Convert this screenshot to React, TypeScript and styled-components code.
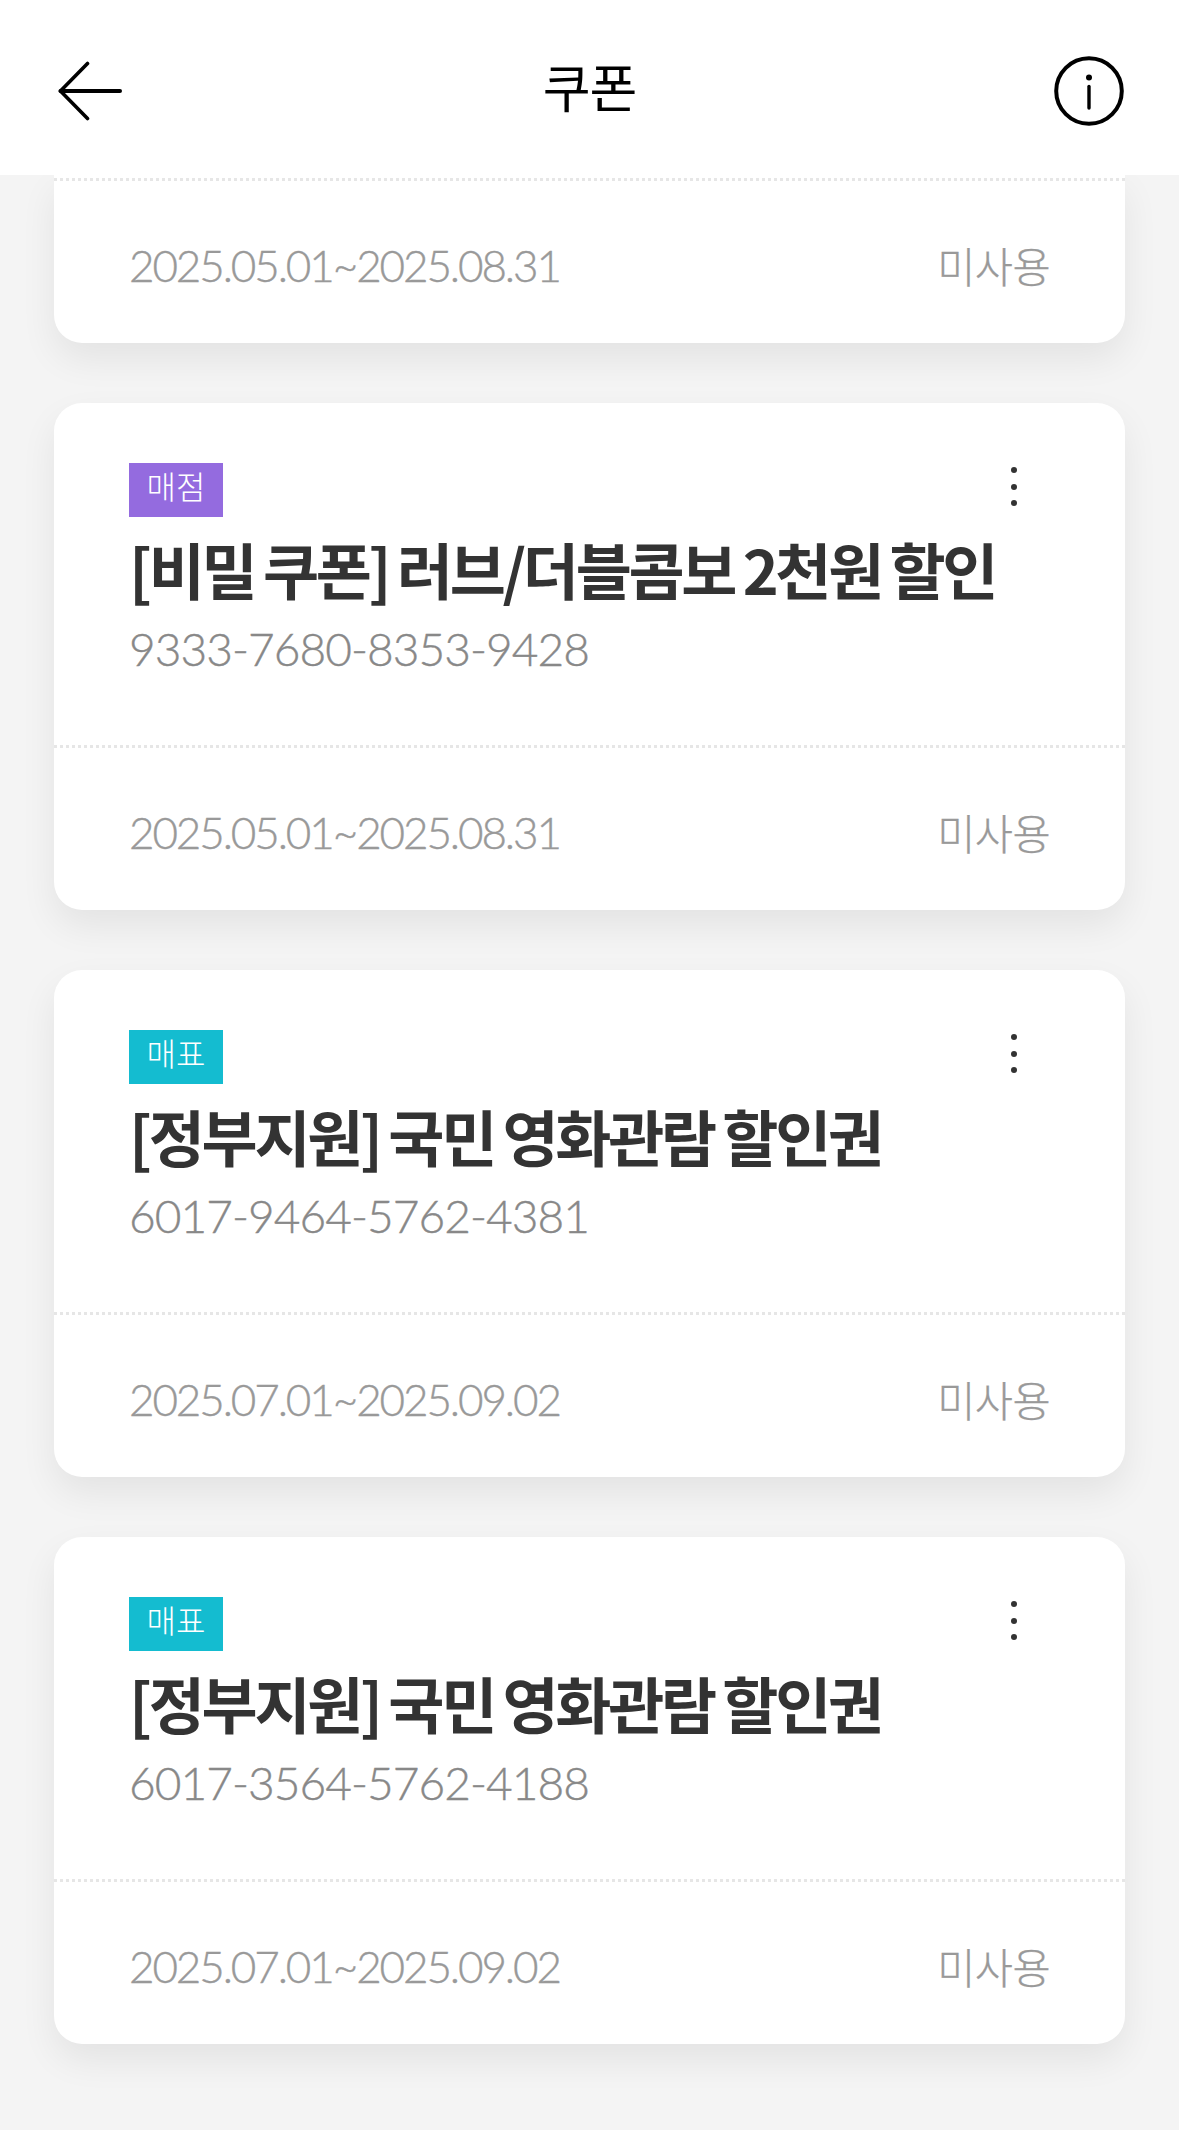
import React from "react";
import styled, { createGlobalStyle, css } from "styled-components";

const Global = createGlobalStyle`
  html, body { margin: 0; padding: 0; background: #f4f4f4; }
  * { box-sizing: border-box; }
`;
const FONT = `Lato, "Noto Sans CJK KR", sans-serif`;

const Page = styled.div`
  width: 1179px; height: 2130px; overflow: hidden; display: flex; flex-direction: column;
  background: #f4f4f4; font-family: ${FONT};
`;
const Header = styled.header`
  flex: 0 0 175px; background: #fff; display: flex; align-items: center;
  padding: 7px 55px 0 56px; position: relative; z-index: 2;
`;
const HeaderTitle = styled.h1`
  flex: 1; margin: 0 0 6px 1px; text-align: center;
  font-size: 52px; line-height: 70px; font-weight: 400; color: #000; letter-spacing: -1px;
`;
const IconBtn = styled.div`display: flex; align-items: center;`;
const List = styled.main`
  padding: 0 54px; display: flex; flex-direction: column; gap: 60px;
`;
const Card = styled.article<{ $scrolled?: boolean }>`
  height: 507px; background: #fff; border-radius: 28px; box-shadow: 0 16px 36px rgba(0,0,0,.07);
  display: flex; flex-direction: column;
  ${p => p.$scrolled && css`
    height: 168px; padding-top: 3px; border-radius: 0 0 28px 28px;
  `}
`;
const CardBody = styled.div`
  flex: 0 0 342px; padding: 60px 75px 0; position: relative; display: flex; flex-direction: column; align-items: flex-start;
`;
const Badge = styled.span<{ $bg: string }>`
  width: 94px; height: 54px; background: ${p => p.$bg}; color: #fff; display: flex; align-items: center; justify-content: center;
  font-size: 32px; font-weight: 300; line-height: 1; padding-bottom: 6px;
`;
const Title = styled.h2`
  margin: 14px 0 0; font-family: "Noto Sans CJK KR", Lato, sans-serif; font-size: 61px; line-height: 76px; font-weight: 700; color: #333;
  letter-spacing: -3.3px; word-spacing: -2px; white-space: nowrap;
`;
const Code = styled.div`
  margin-top: 12px; font-size: 46px; line-height: 60px; font-weight: 300; color: #888; letter-spacing: -0.95px;
  -webkit-text-stroke: 0.4px #888;
`;
const More = styled.div`
  position: absolute; right: 108px; top: 64px; display: flex; flex-direction: column; gap: 10.6px;
  & > i { width: 6px; height: 6px; border-radius: 50%; background: #333; display: block; }
`;
const CardFoot = styled.div`
  flex: 1; border-top: 3px dotted #e6e6e6; padding: 6px 75px 0; display: flex; align-items: center; justify-content: space-between;
`;
const Dates = styled.span`
  font-size: 44px; font-weight: 300; color: #999; letter-spacing: -2.1px;
  -webkit-text-stroke: 0.4px #999;
`;
const Status = styled.span`
  font-size: 41.5px; font-weight: 300; color: #999; letter-spacing: -0.6px;
  -webkit-text-stroke: 0.3px #999;
`;

const cards = [
  { tag: "매점", bg: "#946bdf", title: "[비밀 쿠폰] 러브/더블콤보 2천원 할인", code: "9333-7680-8353-9428", date: "2025.05.01~2025.08.31" },
  { tag: "매표", bg: "#14bcd0", title: "[정부지원] 국민 영화관람 할인권", code: "6017-9464-5762-4381", date: "2025.07.01~2025.09.02" },
  { tag: "매표", bg: "#14bcd0", title: "[정부지원] 국민 영화관람 할인권", code: "6017-3564-5762-4188", date: "2025.07.01~2025.09.02" },
];

export default function App() {
  return (
    <Page>
      <Global />
      <Header>
        <IconBtn>
          <svg width="68" height="60" viewBox="0 0 68 60" fill="none" stroke="#000" strokeLinecap="round" strokeLinejoin="round">
            <path d="M31.5 2.5 L4.5 30 L31.5 57.5" strokeWidth="3.6" />
            <path d="M4.5 30 H64" strokeWidth="4" />
          </svg>
        </IconBtn>
        <HeaderTitle>쿠폰</HeaderTitle>
        <IconBtn>
          <svg width="70" height="70" viewBox="0 0 70 70" fill="none" stroke="#000">
            <circle cx="35" cy="35" r="32.8" strokeWidth="4" />
            <circle cx="35" cy="21.5" r="3" fill="#000" stroke="none" />
            <path d="M35 30.5 V52" strokeWidth="3.4" strokeLinecap="round" />
          </svg>
        </IconBtn>
      </Header>
      <List>
        <Card $scrolled>
          <CardFoot>
            <Dates>2025.05.01~2025.08.31</Dates>
            <Status>미사용</Status>
          </CardFoot>
        </Card>
        {cards.map((c, i) => (
          <Card key={i}>
            <CardBody>
              <Badge $bg={c.bg}>{c.tag}</Badge>
              <Title>{c.title}</Title>
              <Code>{c.code}</Code>
              <More><i /><i /><i /></More>
            </CardBody>
            <CardFoot>
              <Dates>{c.date}</Dates>
              <Status>미사용</Status>
            </CardFoot>
          </Card>
        ))}
      </List>
    </Page>
  );
}
